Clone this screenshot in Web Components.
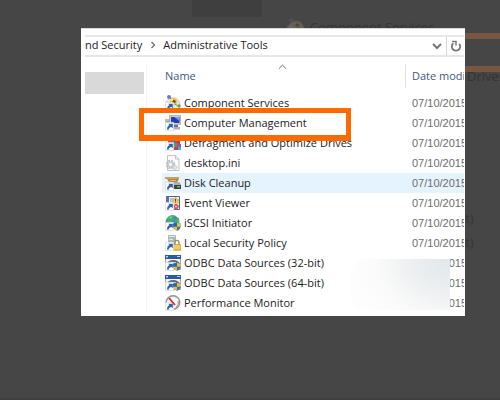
<!DOCTYPE html>
<html lang="en">
<head>
<meta charset="utf-8">
<title>Administrative Tools</title>
<style>
html, body { margin: 0; min-height: 100%; }
body { background: #464646; font-family: "Open Sans", "Noto Sans", sans-serif; font-size: 11px; color: #1c1c1c; }
</style>
</head>
<body>
<tools-desktop>
  <explorer-window>
    <address-bar slot="address"></address-bar>
    <nav-pane slot="nav"></nav-pane>
    <file-table slot="files"></file-table>
  </explorer-window>
</tools-desktop>
<script>
const attach = (host, html) => { host.attachShadow({ mode: "open" }).innerHTML = html; };

customElements.define("tools-desktop", class extends HTMLElement {
  constructor() {
    super();
    attach(this, `
<style>
:host { display: block; position: relative; box-sizing: border-box; min-height: 100vh; padding: 28px 35px 84px 81px; overflow: hidden; }
.under span { position: absolute; font-size: 13px; line-height: 20px; color: #333; white-space: nowrap; }
.pane { position: absolute; left: 192px; top: 0; width: 70px; height: 17px; background: #3f3f3f; }
.frame { position: absolute; left: 240px; right: -20px; top: 33px; height: 27px; border: 6px solid #785640; }
.mini { position: absolute; left: 287px; top: 18px; width: 18px; height: 18px; opacity: .18; }
.edge { position: absolute; left: 0; right: 0; bottom: 0; height: 2px; background: #403e40; }
.right { left: calc(100% - 33px); }
.under .paren { left: calc(100% - 35px); color: #363636; }
slot { display: block; position: relative; }
</style>
<div class="under">
  <div class="pane"></div>
  <file-icon class="mini" kind="component"></file-icon>
  <span style="left:310px;top:17px">Component Services</span>
  <div class="frame"></div>
  <span class="right" style="top:66px">Drives</span>
  <span class="paren" style="top:208px">t)</span>
  <span class="paren" style="top:232px">t)</span>
  <div class="edge"></div>
</div>
<slot></slot>`);
  }
});

customElements.define("explorer-window", class extends HTMLElement {
  constructor() {
    super();
    attach(this, `
<style>
:host { display: grid; grid-template: auto 1fr / 66px 1fr; background: #fff; border-top: 1px solid #d9d9d9; box-sizing: border-box; overflow: hidden; position: relative; }
.address { grid-column: 1 / -1; padding: 6px 1px 0 4px; }
.files { min-width: 0; padding: 7px 1px 3px 15px; }
.nav { border-right: 1px solid #f3f3f3; margin: 7px 0 5px; padding: 8px 2px 0 4px; }
</style>
<div class="address"><slot name="address"></slot></div>
<div class="nav"><slot name="nav"></slot></div>
<div class="files"><slot name="files"></slot></div>`);
  }
});

customElements.define("nav-pane", class extends HTMLElement {
  constructor() {
    super();
    attach(this, `<style>:host { display: block; } div { height: 22px; background: #d9d9d9; }</style><div></div>`);
  }
});

customElements.define("address-bar", class extends HTMLElement {
  constructor() {
    super();
    attach(this, `
<style>
:host { display: flex; align-items: center; height: 18px; border: solid #e6e6e6; border-width: 2px 0; font-size: 11px; }
nav { display: flex; align-items: center; flex: 1; white-space: nowrap; line-height: 16px; padding-bottom: 2px; }
a { color: inherit; text-decoration: none; }
nav svg { margin: 0 6px 0 7px; }
button { border: 0; padding: 0; background: none; height: 18px; display: grid; place-items: center; }
.history { width: 18px; }
.refresh { width: 18px; border-left: 1px solid #d4d4d4; }
svg { display: block; fill: none; stroke: #6a6a6a; }
</style>
<nav aria-label="Path">
  <a href="#security">nd Security</a>
  <svg width="8" height="8" viewBox="0 0 8 8"><path d="M2.5 1 5.5 4 2.5 7" stroke-width="1.3"/></svg>
  <a href="#tools">Administrative Tools</a>
</nav>
<button class="history" aria-label="Previous locations"><svg width="10" height="10" viewBox="0 0 10 10"><path d="M1 3 5 7 9 3" stroke="#777" stroke-width="2"/></svg></button>
<button class="refresh" aria-label="Refresh"><svg width="12" height="12" viewBox="0 0 12 12"><path d="M9.200 3.800A4.200 4.200 0 1 1 3.400 3.200" stroke="#777" stroke-width="1.800"/><path d="M2 1.500h4V5.500" stroke="#777" stroke-width="1.500"/></svg></button>`);
  }
});

const arrow = `<path fill="#fff" stroke="#c3ccd4" stroke-width=".6" d="M.3 7.3h8.4v8.4H.3z"/><path d="M2 14.6c0-2.600.8-3.800 2.400-4.400L3.300 8.800h4.500v4.500L6.400 12C4.600 12.300 3.800 13.200 3.600 14.800z" fill="#2f62a8"/>`;
const shield = `<path d="M12 7.500c1.300.9 2.500 1.100 4 1.200 0 3.600-1 5.900-4 7.300-3-1.400-4-3.700-4-7.300 1.500-.1 2.700-.3 4-1.200z" fill="#2b74c4"/><path d="M12 7.500v4.300H8.400C8.100 10.700 8 9.900 8 8.700c1.500-.1 2.700-.3 4-1.200z" fill="#2468b4"/><path d="M12 7.500c1.300.9 2.500 1.100 4 1.200 0 1.200 0 2-.4 3.100H12zM12 11.800V16c-2-1-3.100-2.400-3.600-4.200z" fill="#f4bd2e"/>`;
const odbc = `<path fill="#f2f4f6" stroke="#9aa8b8" d="M.5.5h15v14H.5z"/><path fill="#2c5a9e" d="M0 0h16v4H0z"/><path fill="#bdd6f2" d="M1 1h2v1.500H1zM12 1h3v1h-3z"/><path d="M3 9c1-4 9-4 11 0" fill="none" stroke="#5c6870" stroke-width="2"/>` + arrow + shield;
const ICONS = {
  component: `<path d="M1 10C1 5 5 2 9 3c4 0 6 4 6 8 0 3-3 4-7 4S1 14 1 10z" fill="#e5e8ea" stroke="#aeb6bc" stroke-width=".7"/><circle cx="4" cy="2" r="2" fill="#6e79c5"/><path d="M5 3 8 6" stroke="#8188b8"/><circle cx="8.500" cy="6.500" r="3.500" fill="#f2c32d"/><circle cx="9" cy="6.500" r="1.600" fill="#57431c"/><circle cx="7" cy="5" r="1" fill="#fff2a0"/><path d="M10 9l3 2" stroke="#777"/><circle cx="14" cy="11" r="1.700" fill="#61ad4d"/>` + arrow,
  computer: `<path fill="#b8bfc3" d="M0 4h5v9H0z"/><path fill="#65b85d" d="M1 6h3v2H1z"/><path fill="#ccd0d5" stroke="#87909a" stroke-width=".6" d="M4.500.500h11v9h-11z"/><path fill="#263cad" d="M6 2h8.500v6H6z"/><path fill="#7e96ef" d="M9 2h5.500v4z"/><path fill="#69737b" d="M9 10h4v4H9z"/><path fill="#a7afb5" d="M8 12h7v2.500H8z"/>` + arrow,
  defrag: `<path fill="#9ba4aa" d="M2 2h12v3H2z"/><path fill="#d53545" d="M3 5h4v4H3z"/><path fill="#3a71d1" d="M7 4h4v4H7z"/><path fill="#d53545" d="M11 5h4v4h-4z"/><path fill="#44a94b" d="M8 8h4v4H8z"/><path fill="#ad48b5" d="M12 9h4v4h-4z"/><path fill="#d53545" d="M8 12h5v3H8z"/><path fill="#2bbbd0" d="M13 12h3v3h-3z"/>` + arrow,
  ini: `<path fill="#fbfbfb" stroke="#b3b3b3" stroke-width=".8" d="M2.500.500h8l3.500 3.500v11.500H2.500z"/><path d="M10.500.500V4H14" fill="none" stroke="#b3b3b3" stroke-width=".8"/><circle cx="5.500" cy="9.500" r="3.800" fill="none" stroke="#bcc1c4" stroke-width="2" stroke-dasharray="2 1"/><circle cx="5.500" cy="9.500" r="2.500" fill="#e7e9ea" stroke="#aeb3b6" stroke-width=".8"/><circle cx="5.500" cy="9.500" r="1" fill="#fff"/><circle cx="10" cy="12.500" r="2" fill="#e2e4e5" stroke="#babfc2" stroke-dasharray="1 .6"/>`,
  cleanup: `<path fill="#c6a25d" d="M0 2h14v2H0z"/><path fill="#ae8748" d="M2 4h12l-2 3H4z"/><path fill="#d9bd83" d="M5 5h6v1H5z"/><path fill="#aab0b3" d="m5 8 2-1h7l2 2v2H5z"/><path fill="#39443e" d="M5 10h11v4H5z"/><path fill="#62ca4d" d="M12 11h3v1.500h-3z"/>` + arrow,
  event: `<path fill="#eef1f7" stroke="#52658c" d="M1.500 1.500h13v13h-13z"/><path fill="#5570a5" d="M1 1h3v13H1z"/><path d="M5 4h4M5 6h3M11 5h3M11 11h3" stroke="#8293b3"/><path d="m10.500 2 3.500 6H7z" fill="#ffd43b" stroke="#bf9520" stroke-width=".5"/><path d="M10.500 4v2M10.500 6.500v1" stroke="#4a4120"/><circle cx="11" cy="11.500" r="2.500" fill="#d53535"/><path d="M10 10.500l2 2M12 10.500l-2 2" stroke="#fff"/>` + arrow,
  iscsi: `<circle cx="7.500" cy="7" r="6.500" fill="#3a8bd2" stroke="#3c6c86" stroke-width=".6"/><path d="M2 4c2-4 7-4 8-3L8 3l1 2-3 2-3-1zM10 4l4-1v5l-3 1z" fill="#49b557"/><path d="M4 2.500 7 1.500 6 3z" fill="#c5f2bd"/>` + arrow + shield,
  security: `<path fill="#e6eaec" stroke="#9ba8ae" stroke-width=".8" d="M3.500.500h7v12h-7z"/><path d="M4 3h6M4 6h6M4 9h6" stroke="#708c8e"/><path fill="#7ad16b" d="M8 4h2v1H8z"/><path d="M9.500 10V8c0-3.500 4.500-3.500 4.500 0v2" fill="none" stroke="#a68c49" stroke-width="1.300"/><path fill="#efb52c" stroke="#b9861d" stroke-width=".5" d="M8 9.500h7.700v5.800H8z"/><path stroke="#ffe28a" d="M9 11h6M9 13h6"/>` + arrow,
  odbc,
  perf: `<circle cx="8" cy="7.500" r="6.800" fill="#fff" stroke="#8d9499" stroke-width="1.400"/><circle cx="8" cy="7.500" r="5" fill="none" stroke="#c0c0c0" stroke-width=".8" stroke-dasharray="1 1.500"/><path d="M11 12c2-1 3-4 2-6" fill="none" stroke="#cf7a72"/>` + arrow + `<path d="m4 3 6 7" stroke="#d52a2a" stroke-width="1.800"/>`
};

customElements.define("file-icon", class extends HTMLElement {
  constructor() { super(); this.attachShadow({ mode: "open" }); }
  connectedCallback() {
    this.shadowRoot.innerHTML = `<style>:host { display: block; width: 16px; height: 16px; flex: none; } svg { display: block; width: 100%; height: 100%; }</style><svg viewBox="0 0 16 16" aria-hidden="true">${ICONS[this.getAttribute("kind")]}</svg>`;
  }
});

const FILES = [
  ["component", "Component Services"],
  ["computer", "Computer Management"],
  ["defrag", "Defragment and Optimize Drives"],
  ["ini", "desktop.ini"],
  ["cleanup", "Disk Cleanup"],
  ["event", "Event Viewer"],
  ["iscsi", "iSCSI Initiator"],
  ["security", "Local Security Policy"],
  ["odbc", "ODBC Data Sources (32-bit)"],
  ["odbc", "ODBC Data Sources (64-bit)"],
  ["perf", "Performance Monitor"]
];

customElements.define("file-table", class extends HTMLElement {
  constructor() {
    super();
    attach(this, `
<style>
:host { display: block; position: relative; font-size: 11px; }
table { width: 100%; table-layout: fixed; border-collapse: separate; border-spacing: 0; }
col.date { width: 59px; }
th, td { padding: 0; text-align: left; font-weight: 400; white-space: nowrap; overflow: hidden; height: 20px; line-height: 20px; }
thead th { height: 24px; line-height: 24px; color: #44597d; }
thead th:first-child { padding-left: 3px; }
thead th:last-child { border-left: 1px solid #e2e2e2; padding-left: 6px; }
tbody::before { content: ""; display: block; height: 5px; }
tbody td:last-child { padding-left: 7px; color: #6d6d6d; font-family: "Liberation Sans", Arial, sans-serif; }
.name { display: flex; align-items: center; gap: 3px; padding-left: 3px; height: 20px; }
.hover { background: #e5f3ff; }
.sort { position: absolute; left: 116px; top: 0; fill: none; stroke: #666; }
.mark { position: absolute; left: -23px; top: 44px; width: 202px; height: 22px; border: 5px solid #ff6a00; border-bottom-width: 6px; }
.smudge { position: absolute; right: 14px; bottom: 3px; width: 100px; height: 51px; border-radius: 16px 0 0 16px;
  background: radial-gradient(ellipse 96px 80px at 100% 0, #e1e7ea, #eef0f1 45%, #fafafa 75%, #fdfdfd 100%); }
</style>
<table>
  <colgroup><col><col class="date"></colgroup>
  <thead><tr><th scope="col">Name</th><th scope="col">Date modi</th></tr></thead>
  <tbody>${FILES.map(([kind, name]) => `<tr${kind === "cleanup" ? ' class="hover"' : ""}><td><div class="name"><file-icon kind="${kind}"></file-icon><span>${name}</span></div></td><td>07/10/2015</td></tr>`).join("")}</tbody>
</table>
<svg class="sort" width="9" height="6" viewBox="0 0 9 6"><path d="M.8 4.800 4.500 1.200 8.200 4.800"/></svg>
<div class="mark"></div>
<div class="smudge"></div>`);
  }
});
</script>
</body>
</html>
